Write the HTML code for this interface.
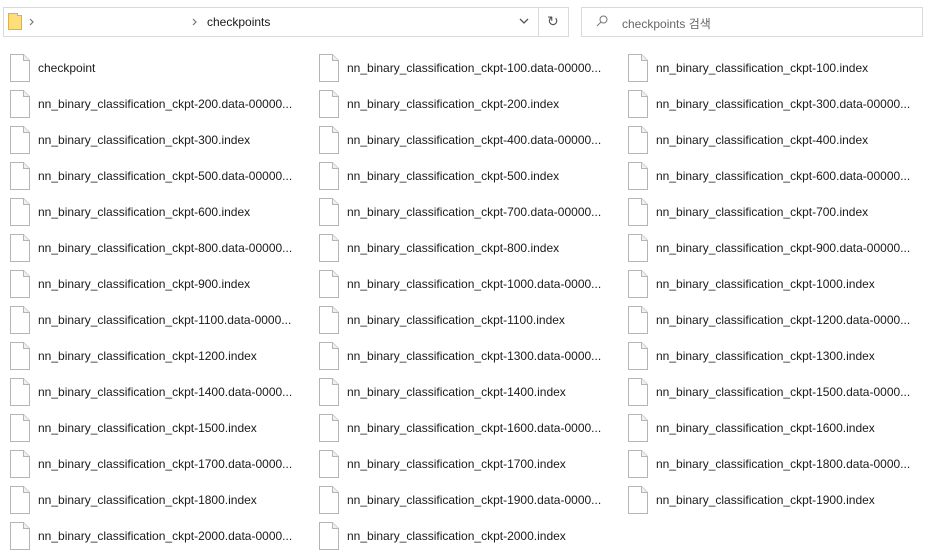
<!DOCTYPE html>
<html><head><meta charset="utf-8"><style>
body{margin:0;width:947px;height:557px;background:#fff;font-family:"Liberation Sans","Noto Sans CJK KR",sans-serif;font-size:12px;color:#1a1a1a;position:relative;overflow:hidden}
.box{position:absolute;border:1px solid #d9d9d9;box-sizing:border-box;background:#fff}
.it{position:absolute;height:28px;display:flex;align-items:center}
.it svg{width:22px;height:28px;flex:none}
.it span{margin-left:7px;white-space:nowrap}
</style></head><body>
<div class="box" style="left:3px;top:7px;width:566px;height:30px"></div>
<div style="position:absolute;left:538px;top:7px;width:1px;height:30px;background:#d9d9d9"></div>
<svg style="position:absolute;left:8px;top:13px" width="14" height="17"><path d="M0.5 0.5h9v2h4v14h-13z" fill="#fcdf7c" stroke="#e2b23c"/></svg>
<svg style="position:absolute;left:29px;top:18px" width="6" height="8"><path d="M1 1l3 3-3 3" fill="none" stroke="#777" stroke-width="1.2"/></svg>
<svg style="position:absolute;left:192px;top:18px" width="6" height="8"><path d="M1 1l3 3-3 3" fill="none" stroke="#777" stroke-width="1.2"/></svg>
<div style="position:absolute;left:207px;top:15px">checkpoints</div>
<svg style="position:absolute;left:519px;top:18px" width="10" height="7"><path d="M1 1l4 4 4-4" fill="none" stroke="#555" stroke-width="1.3"/></svg>
<div style="position:absolute;left:547px;top:13px;color:#555;font-size:14px">↻</div>
<div class="box" style="left:581px;top:7px;width:342px;height:30px"></div>
<svg style="position:absolute;left:596px;top:15px" width="12" height="12"><circle cx="7.5" cy="4.5" r="3.5" fill="none" stroke="#777"/><path d="M5 7L1 11" stroke="#777"/></svg>
<div style="position:absolute;left:622px;top:15px;color:#666">checkpoints 검색</div>
<div id="g"></div>
<script>
var names=["checkpoint"];
for(var i=100;i<=2000;i+=100){var d=i>=1000?"nn_binary_classification_ckpt-"+i+".data-0000...":"nn_binary_classification_ckpt-"+i+".data-00000...";names.push(d);names.push("nn_binary_classification_ckpt-"+i+".index");}
var h="",ic='<svg viewBox="0 0 22 28"><path d="M1.5 0.5h13l6 6v21h-19z" fill="#fff" stroke="#b5b5b5"/><path d="M14.5 0.5v6h6" fill="#f0f0f0" stroke="#b5b5b5"/></svg>';
for(var k=0;k<names.length;k++){var r=Math.floor(k/3),c=k%3;h+='<div class="it" style="left:'+(9+c*309)+'px;top:'+(54+r*36)+'px">'+ic+'<span>'+names[k]+'</span></div>';}
document.getElementById("g").innerHTML=h;
</script>
</body></html>
